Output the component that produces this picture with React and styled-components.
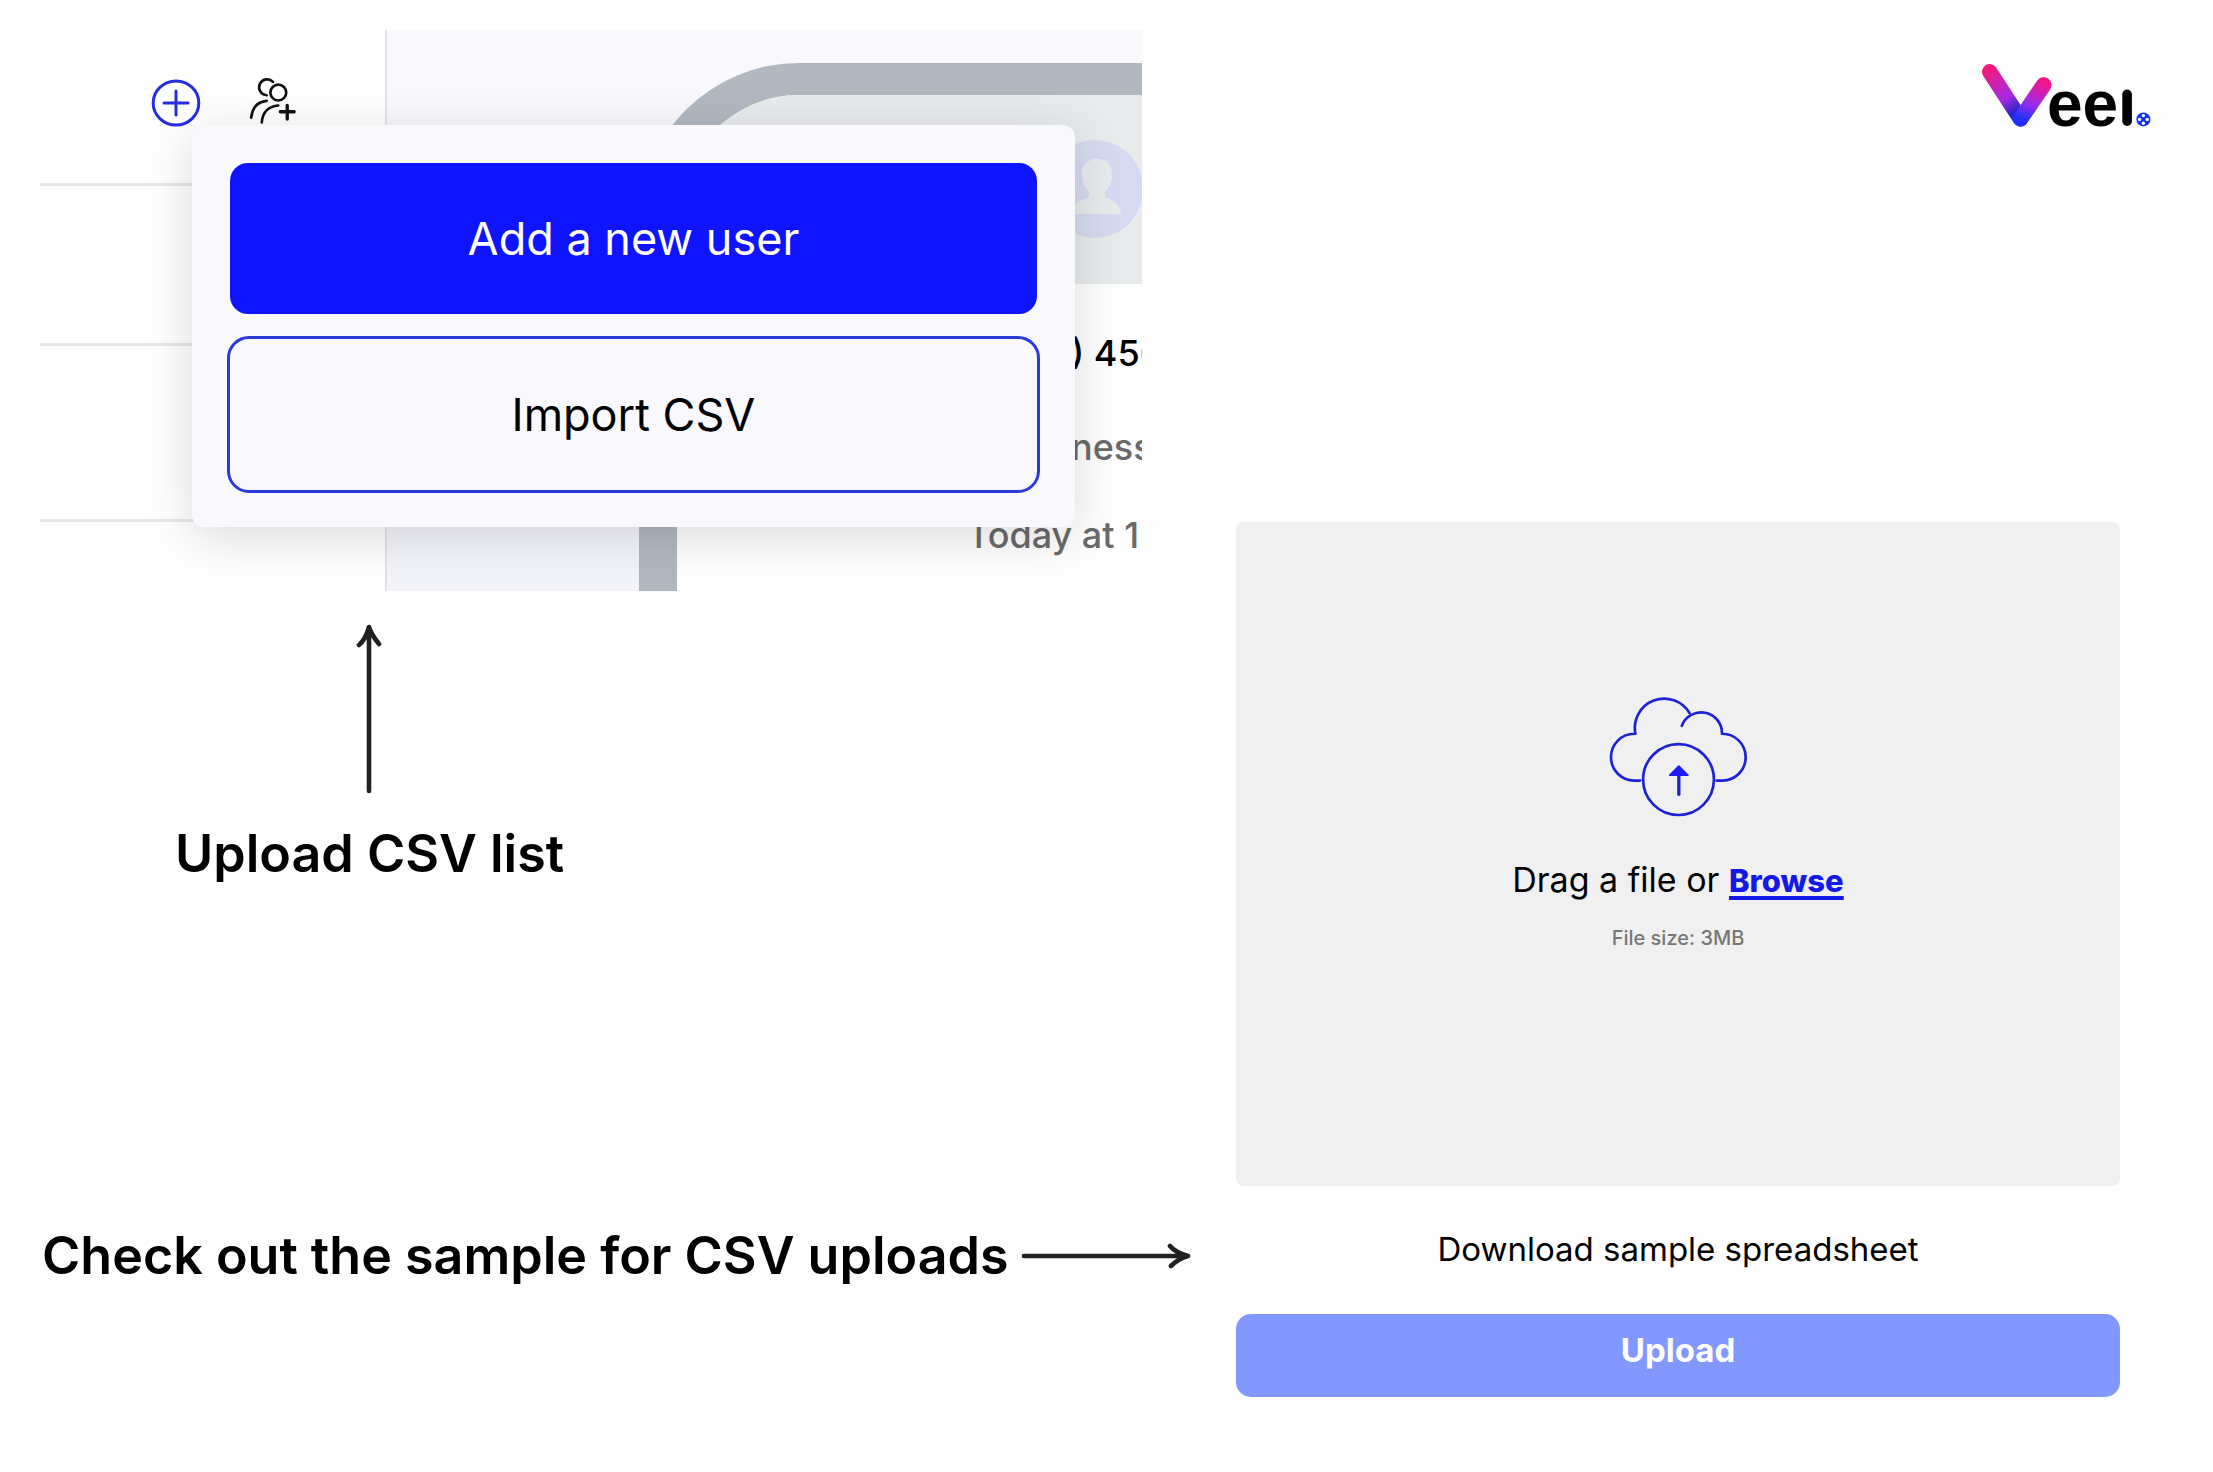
import styled, { createGlobalStyle } from "styled-components"

const GlobalStyle = createGlobalStyle`
  * {
    box-sizing: border-box;
  }

  body {
    margin: 0;
    background: #fefefe;
    color: #000;
    font-family: Inter, "Open Sans", sans-serif;
  }

  h2, p {
    margin: 0;
  }

  button {
    font-family: inherit;
    cursor: pointer;
  }
`;

const Page = styled.main`
  display: grid;
  grid-template-columns: minmax(0, 1152fr) minmax(0, 915fr);
  column-gap: 44px;
  padding: 30px 62px 72px 40px;
`;

const Guide = styled.div`
  display: flex;
  flex-direction: column;
  align-items: flex-start;
`;

const Preview = styled.section`
  position: relative;
  display: flex;
  width: calc(100% - 50px);
  height: 561px;
  overflow: hidden;
`;

const Sidebar = styled.div`
  flex: none;
  width: 347px;
  border-right: 2px solid #e3e3e6;
`;

const SidebarRow = styled.div`
  display: flex;
  align-items: flex-start;
  gap: 47px;
  height: ${(props) => props.$height}px;
  padding: 47px 0 0 111px;
  border-bottom: 3px solid #e6e6e6;
`;

const IconButton = styled.button`
  display: flex;
  padding: 0;
  border: 0;
  background: none;
`;

const Stage = styled.div`
  flex: 1;
  min-width: 0;
  padding: 33px 0 0 252px;
  overflow: hidden;
  background: linear-gradient(#f9f9fd 60%, #f1f3f9);
`;

const Phone = styled.div`
  height: 100%;
  overflow: hidden;
  border: solid #b1b8c0;
  border-width: 32px 0 0 38px;
  border-top-left-radius: 160px;
  background: #fefefe;
  white-space: nowrap;
`;

const PhoneHeader = styled.div`
  height: 189px;
  padding: 45px 0 0 370px;
  overflow: hidden;
  background: #e8ebec;
`;

const PhoneLine = styled.p`
  padding-left: ${(props) => props.$indent}px;
  margin-top: ${(props) => props.$gap}px;
  color: ${(props) => (props.$muted ? "#6a6a6a" : "#000")};
  font-size: 36px;
  font-weight: 500;
  line-height: 44px;
`;

const Menu = styled.div`
  position: absolute;
  top: 95px;
  left: 152px;
  right: 67px;
  display: flex;
  flex-direction: column;
  gap: 22px;
  padding: 38px 35px 34px;
  border-radius: 12px;
  background: #f9f9fd;
  box-shadow: 0 10px 50px rgba(0, 0, 0, 0.14);
`;

const MenuButton = styled.button`
  height: 157px;
  border: 3px solid #2a3bd8;
  border-radius: 22px;
  background: #f9f9fd;
  color: #000;
  font-size: 45px;
`;

const PrimaryButton = styled(MenuButton)`
  height: 151px;
  margin: 0 3px;
  border: 0;
  border-radius: 18px;
  background: #0f14ff;
  color: #fff;
`;

const Note = styled.div`
  display: flex;
  flex-direction: ${(props) => (props.$row ? "row" : "column")};
  align-items: center;
  gap: ${(props) => (props.$row ? 12 : 28)}px;
`;

const UploadNote = styled(Note)`
  margin: 33px 0 338px 133px;
`;

const NoteText = styled.h2`
  padding-left: 2px;
  font-size: 52px;
  font-weight: 600;
  line-height: 64px;
  white-space: nowrap;
`;

const Side = styled.div`
  display: flex;
  flex-direction: column;
`;

const Logo = styled.svg`
  align-self: flex-end;
  margin: 34px 0 394px;
  overflow: visible;
`;

const UploadCard = styled.section`
  display: flex;
  flex-direction: column;
  align-items: center;
  margin-right: 31px;
`;

const DropZone = styled.div`
  display: flex;
  flex-direction: column;
  align-items: center;
  width: 100%;
  min-height: 664px;
  padding-top: 174px;
  border-radius: 8px;
  background: #f0f0f0;
`;

const DropText = styled.p`
  margin-top: 43px;
  font-size: 34px;
  line-height: 40px;
`;

const Browse = styled.a`
  color: #1519e6;
  font-size: 31px;
  font-weight: 800;
  text-decoration: underline;
  text-decoration-thickness: 4px;
  text-decoration-skip-ink: none;
  text-underline-offset: 4px;
`;

const FileSize = styled.p`
  margin-top: 23px;
  color: #777;
  font-size: 20px;
  font-weight: 500;
  line-height: 28px;
`;

const Download = styled.a`
  margin: 43px 0 45px;
  color: #000;
  font-size: 33px;
  line-height: 40px;
  text-decoration: none;
`;

const UploadButton = styled.button`
  width: 100%;
  height: 83px;
  padding: 0 0 12px;
  border: 0;
  border-radius: 15px;
  background: #8298ff;
  color: #fff;
  font-size: 33px;
  font-weight: 700;
`;

function PlusIcon() {
  return (
    <svg width="50" height="50" viewBox="0 0 50 50" fill="none" stroke="#262fe0" strokeWidth="3" strokeLinecap="round">
      <ellipse cx="25" cy="26" rx="22.8" ry="22" />
      <path d="M13 26h24M25 14v24" />
    </svg>
  )
}

function AddPeopleIcon() {
  return (
    <svg width="50" height="48" viewBox="355 48 150 145" fill="none" stroke="#111" strokeWidth="8" strokeLinecap="round">
      <circle cx="446" cy="95" r="24" />
      <path d="M430 63A24 24 0 1 0 411 103" />
      <path d="M364 171Q369 124 411 120" />
      <path d="M396 185Q400 138 446 134" />
      <path d="M452 153h42M473 134v41" strokeWidth="10" />
    </svg>
  )
}

function Avatar() {
  return (
    <svg width="96" height="98" viewBox="0 0 96 98">
      <ellipse cx="48" cy="49" rx="48" ry="49" fill="#d5daf0" />
      <path d="M50 19c-10 0-16 7-15 17 0 7 3 12 7 15v6c-7 3-16 6-17 17h49c-1-11-9-14-16-17v-6c4-3 7-8 7-15 1-10-5-17-15-17z" fill="#e8ebec" />
    </svg>
  )
}

function CloudIcon() {
  return (
    <svg width="139" height="121" viewBox="387 110 416 362" fill="none" stroke="#1c22d6" strokeWidth="8" strokeLinecap="round" strokeLinejoin="round">
      <path d="M480 363H463A70 70 0 0 1 463 223H466A88 88 0 0 1 628 161" />
      <path d="M605 199A62 62 0 0 1 725 223A70 70 0 1 1 727 363H709" />
      <circle cx="595" cy="360" r="106" />
      <path d="M596 404V345" strokeWidth="10" />
      <path d="M596 320l27 27h-54z" fill="#1c1cf5" stroke="#1c1cf5" strokeWidth="5" />
    </svg>
  )
}

function UpArrow() {
  return (
    <svg width="26" height="170" viewBox="0 0 26 170" fill="none" stroke="#202020" strokeWidth="4.6" strokeLinecap="round" strokeLinejoin="round">
      <path d="M13 167V3M3 21C8 17 11 10 13 3C15 10 19 15 23 20" />
    </svg>
  )
}

function RightArrow() {
  return (
    <svg width="170" height="26" viewBox="0 0 170 26" fill="none" stroke="#202020" strokeWidth="4.6" strokeLinecap="round" strokeLinejoin="round">
      <path d="M3 13H167M149 3C153 8 160 11 167 13C160 15 154 19 150 23" />
    </svg>
  )
}

function VeelLogo() {
  return (
    <Logo width="169" height="64" viewBox="0 0 169 64" role="img" aria-label="Veel">
      <defs>
        <linearGradient id="left" gradientUnits="userSpaceOnUse" x1="6" y1="4" x2="40" y2="58">
          <stop offset="0" stopColor="#f5197f" />
          <stop offset="0.55" stopColor="#a22be0" />
          <stop offset="0.8" stopColor="#2e26c8" />
          <stop offset="1" stopColor="#1f2dff" />
        </linearGradient>
        <linearGradient id="right" gradientUnits="userSpaceOnUse" x1="58" y1="16" x2="42" y2="60">
          <stop offset="0" stopColor="#f5158a" />
          <stop offset="0.55" stopColor="#9a2de6" />
          <stop offset="0.9" stopColor="#2430ff" />
        </linearGradient>
      </defs>
      <path d="M7.7 7.7L38.5 55" stroke="url(#left)" strokeWidth="15.4" strokeLinecap="round" />
      <path d="M61.7 21L38.7 54.6" stroke="url(#right)" strokeWidth="15.6" strokeLinecap="round" />
      <text x="65" y="62" fontFamily="Liberation Sans, sans-serif" fontWeight="700" fontSize="64">ee</text>
      <rect x="140.3" y="25.5" width="9.6" height="36.5" rx="4.8" />
      <circle cx="161.4" cy="55.4" r="7" fill="#1030ff" />
      <g fill="#fff">
        <circle cx="161.4" cy="51.6" r="1.7" />
        <circle cx="161.4" cy="59.2" r="1.7" />
        <circle cx="157.6" cy="55.4" r="1.7" />
        <circle cx="165.2" cy="55.4" r="1.7" />
      </g>
    </Logo>
  )
}

function App() {
  return (
    <>
      <GlobalStyle />
      <Page>
        <Guide>
          <Preview>
            <Sidebar>
              <SidebarRow $height={156}>
                <IconButton aria-label="Add"><PlusIcon /></IconButton>
                <IconButton aria-label="Add people"><AddPeopleIcon /></IconButton>
              </SidebarRow>
              <SidebarRow $height={160} />
              <SidebarRow $height={176} />
            </Sidebar>
            <Stage>
              <Phone>
                <PhoneHeader><Avatar /></PhoneHeader>
                <PhoneLine $indent={394} $gap={47}>) 456</PhoneLine>
                <PhoneLine $indent={394} $gap={50} $muted>ness</PhoneLine>
                <PhoneLine $indent={290} $gap={44} $muted>Today at 1</PhoneLine>
              </Phone>
            </Stage>
            <Menu>
              <PrimaryButton>Add a new user</PrimaryButton>
              <MenuButton>Import CSV</MenuButton>
            </Menu>
          </Preview>
          <UploadNote>
            <UpArrow />
            <NoteText>Upload CSV list</NoteText>
          </UploadNote>
          <Note $row>
            <NoteText>Check out the sample for CSV uploads</NoteText>
            <RightArrow />
          </Note>
        </Guide>
        <Side>
          <VeelLogo />
          <UploadCard>
            <DropZone>
              <CloudIcon />
              <DropText>Drag a file or <Browse href="#browse">Browse</Browse></DropText>
              <FileSize>File size: 3MB</FileSize>
            </DropZone>
            <Download href="#sample">Download sample spreadsheet</Download>
            <UploadButton>Upload</UploadButton>
          </UploadCard>
        </Side>
      </Page>
    </>
  )
}

export default App
